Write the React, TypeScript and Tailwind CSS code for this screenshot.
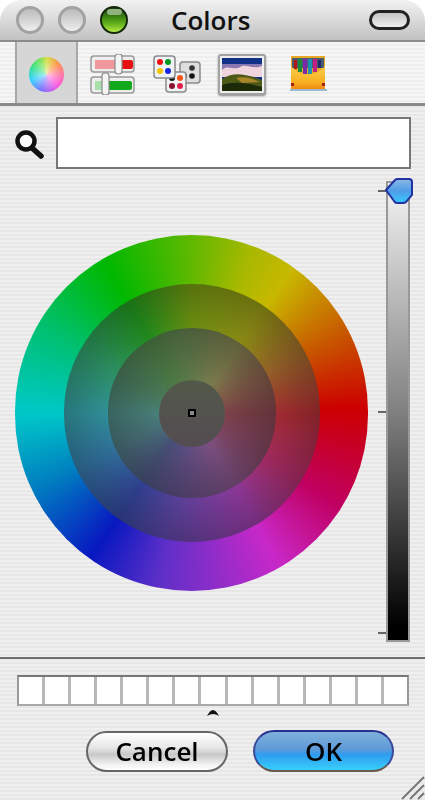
import React from "react";

const font = { title: "font-['Open_Sans','Noto_Sans',sans-serif]" };

function TrafficLight({ green }: { green?: boolean }) {
  if (green) {
    return (
      <div className="w-[28px] h-[28px] rounded-full border-[2px] border-[#13280a] bg-[linear-gradient(#1f3f10,#3f8a12_40%,#6cb81e_70%,#b4ec48)] flex justify-center">
        <div className="mt-[1px] w-[15px] h-[6px] rounded-full bg-[#8fb27e]" />
      </div>
    );
  }
  return (
    <div className="w-[28px] h-[28px] rounded-full border-[3px] border-[#a2a2a2] bg-[linear-gradient(#bcbcbc,#d6d6d6_55%,#f0f0f0)]" />
  );
}

function SlidersIcon() {
  return (
    <svg width="45" height="41" viewBox="0 0 45 41">
      <rect x="1" y="2" width="43" height="16" rx="3" fill="#eee" stroke="#9a9a9a" strokeWidth="1.5" />
      <rect x="5" y="6" width="38" height="9" rx="2" fill="#e80f12" />
      <rect x="5" y="6" width="23" height="9" fill="#f0989c" />
      <rect x="1" y="23" width="43" height="16" rx="3" fill="#eee" stroke="#9a9a9a" strokeWidth="1.5" />
      <rect x="5" y="27" width="37" height="9" rx="2" fill="#12a81c" />
      <rect x="5" y="27" width="12" height="9" fill="#a8dfa8" />
      <rect x="25" y="0" width="7" height="20" rx="3" fill="#f4f4f4" stroke="#8a8a8a" strokeWidth="1.2" />
      <rect x="12" y="19" width="7" height="22" rx="3" fill="#f4f4f4" stroke="#8a8a8a" strokeWidth="1.2" />
    </svg>
  );
}

function PaletteIcon() {
  return (
    <svg width="49" height="38" viewBox="0 0 49 38">
      <rect x="27" y="7" width="20" height="21" rx="3" fill="#dedede" stroke="#8a8a8a" strokeWidth="1.5" />
      <circle cx="39" cy="13" r="2.8" fill="#333" />
      <circle cx="31" cy="21" r="2.8" fill="#111" />
      <circle cx="39" cy="21" r="2.8" fill="#111" />
      <rect x="13" y="17" width="20" height="20" rx="3" fill="#eef2f4" stroke="#8a8a8a" strokeWidth="1.5" />
      <circle cx="19" cy="23" r="3" fill="#111" />
      <circle cx="27" cy="23" r="3" fill="#f0561a" />
      <circle cx="19" cy="31" r="3" fill="#8a1030" />
      <circle cx="27" cy="31" r="3" fill="#e0204a" />
      <rect x="1" y="1" width="21" height="22" rx="3" fill="#eef2f4" stroke="#8a8a8a" strokeWidth="1.5" />
      <circle cx="7" cy="7" r="3" fill="#ee1111" />
      <circle cx="15" cy="7" r="3" fill="#0a9a20" />
      <circle cx="7" cy="16" r="3" fill="#f5c400" />
      <circle cx="15" cy="16" r="3" fill="#1424e0" />
    </svg>
  );
}

function ImageIcon() {
  return (
    <div className="w-[48px] h-[41px] rounded-[3px] border-[2px] border-[#a3a3a3] bg-[#eee] p-[2px] shadow-[0_1px_2px_#888]">
      <svg width="40" height="33" viewBox="0 0 40 33" className="block">
        <rect width="40" height="33" fill="#12328a" />
        <rect y="6" width="40" height="10" fill="#8a78b0" />
        <path d="M0 12 C6 6 12 13 18 9 C24 5 30 12 40 8 V19 H0 Z" fill="#f0d4de" />
        <path d="M0 21 C10 14 22 15 40 22 V33 H0 Z" fill="#4d5a18" />
        <path d="M14 20 C22 18 30 20 38 24 L20 25 Z" fill="#a9852a" />
        <path d="M0 27 C12 23 26 25 40 29 V33 H0 Z" fill="#1d2a0a" />
      </svg>
    </div>
  );
}

function CrayonsIcon() {
  return (
    <svg width="38" height="38" viewBox="0 0 38 38">
      <defs>
        <linearGradient id="box" x1="0" y1="0" x2="0" y2="1">
          <stop offset="0" stopColor="#fbd050" />
          <stop offset="0.7" stopColor="#f8b020" />
          <stop offset="1" stopColor="#ee8a10" />
        </linearGradient>
      </defs>
      <rect x="1" y="1" width="34" height="33" fill="#e8a828" />
      <rect x="2" y="3" width="32" height="10" fill="#4a5a70" />
      <rect x="4" y="5" width="3" height="9" fill="#b01818" />
      <rect x="8" y="4" width="4" height="13" fill="#1a8a3a" />
      <rect x="13" y="4" width="4" height="15" fill="#7a2aa8" />
      <rect x="18" y="4" width="4" height="15" fill="#2090b0" />
      <rect x="23" y="4" width="4" height="13" fill="#c02080" />
      <rect x="28" y="5" width="3" height="8" fill="#1a2a6a" />
      <path d="M1 11 C8 22 27 22 35 11 V34 H1 Z" fill="url(#box)" />
      <rect x="1" y="28" width="3" height="3" fill="#a02010" />
      <rect x="32" y="28" width="3" height="3" fill="#a02010" />
      <rect x="0" y="34" width="37" height="2" fill="#9db8d0" />
    </svg>
  );
}

function PillButton({ label, primary }: { label: string; primary?: boolean }) {
  return (
    <div
      className={
        primary
          ? "w-[141px] h-[42px] rounded-full border-[2px] border-t-[#27308f] border-x-[#3b4a9a] border-b-[#6a5a50] bg-[linear-gradient(#7fb0dc_0%,#5f9ad8_45%,#2f9cf0_60%,#37d0fb_100%)] flex items-center justify-center text-[26px] font-semibold text-black"
          : "w-[142px] h-[41px] rounded-full border-[2px] border-[#666] bg-[linear-gradient(#ffffff_0%,#e6e6e6_40%,#c8c8c8_58%,#f2f2f2_85%,#ffffff_100%)] flex items-center justify-center text-[26px] font-semibold text-black"
      }
    >
      <span className={font.title}>{label}</span>
    </div>
  );
}

export default function App() {
  const cells = Array.from({ length: 15 }, (_, i) => i);
  return (
    <div className="relative w-[425px] h-[800px] overflow-hidden bg-white">
      <div className="flex flex-col w-full h-full rounded-t-[22px] overflow-hidden bg-[repeating-linear-gradient(#efefef_0px,#efefef_2px,#e7e7e7_2px,#e7e7e7_4px)] blur-[0.6px]">
        {/* title bar */}
        <div className="flex items-center h-[42px] shrink-0 pl-[16px] pr-[16px] border-b-[2px] border-[#8c8c8c] bg-[linear-gradient(#f2f2f2,#dcdcdc_45%,#c2c2c2)]">
          <div className="flex gap-[14px]">
            <TrafficLight />
            <TrafficLight />
            <TrafficLight green />
          </div>
          <div className={`${font.title} ml-[43px] text-[26px] font-semibold text-[#111] leading-none`}>Colors</div>
          <div className="ml-auto mr-[-1px] w-[41px] h-[20px] rounded-full border-[3px] border-[#222] bg-[linear-gradient(#c5c5c5,#eeeeee)]" />
        </div>

        {/* toolbar */}
        <div className="flex items-center h-[64px] shrink-0 pl-[15px] border-b-[3px] border-[#8a8a8a] bg-[repeating-linear-gradient(#f6f6f6_0px,#f6f6f6_2px,#eeeeee_2px,#eeeeee_4px)]">
          <div className="flex items-center justify-center w-[63px] h-full bg-[#d6d6d6] border-x-[2px] border-[#a8a8a8]">
            <div className="relative w-[35px] h-[35px] mt-[3px] rounded-full bg-[conic-gradient(#d0e040,#ff9040_45deg,#ff70a0_90deg,#ff50e0_135deg,#7070ff_200deg,#30d0ff_250deg,#30e080_300deg,#80e050_340deg,#d0e040)]">
              <div className="absolute inset-0 rounded-full bg-[radial-gradient(#ffffff99_5%,#ffffff00_70%)]" />
            </div>
          </div>
          <div className="ml-[12px] mt-[3px]">
            <SlidersIcon />
          </div>
          <div className="ml-[18px] mt-[3px]">
            <PaletteIcon />
          </div>
          <div className="ml-[16px] mt-[3px]">
            <ImageIcon />
          </div>
          <div className="ml-[24px] mt-[3px]">
            <CrayonsIcon />
          </div>
        </div>

        {/* search */}
        <div className="flex items-center shrink-0 pt-[11px] pl-[14px] pr-[14px]">
          <svg width="30" height="30" viewBox="0 0 30 30" className="shrink-0 mt-[4px]">
            <circle cx="12" cy="11" r="8.5" fill="#fff" stroke="#111" strokeWidth="4.5" />
            <path d="M18 18 L27 26" stroke="#111" strokeWidth="5.5" strokeLinecap="round" />
          </svg>
          <div className="ml-[12px] flex-1 h-[52px] bg-white border-[2px] border-[#777]" />
        </div>

        {/* wheel and brightness slider */}
        <div className="relative flex items-start shrink-0 h-[488px] pl-[15px]">
          <div className="mt-[66px] relative w-[353px] h-[356px] rounded-full flex items-center justify-center bg-[conic-gradient(#60b800_0deg,#a8b800_20deg,#c8b800_35deg,#c85800_62deg,#cc0000_88deg,#c00060_122deg,#c828c8_150deg,#6030c8_190deg,#0818c0_215deg,#0080c0_245deg,#00c8c8_270deg,#00c070_300deg,#00b800_330deg,#60b800_360deg)]">
            <div className="w-[256px] h-[258px] rounded-full flex items-center justify-center bg-[radial-gradient(closest-side,#00000000_66%,#00000030_100%),conic-gradient(#6a8c10_0deg,#8a8a14_35deg,#946028_62deg,#a02a30_90deg,#a02a60_122deg,#8c3898_150deg,#584098_190deg,#304090_215deg,#30709a_245deg,#309098_270deg,#2c9060_300deg,#1f8a1c_330deg,#6a8c10_360deg)]">
              <div className="w-[168px] h-[170px] rounded-full flex items-center justify-center bg-[radial-gradient(closest-side,#00000000_40%,#00000038_100%),conic-gradient(#60784a_0deg,#7c7a4c_35deg,#805c48_62deg,#7c4048_90deg,#7c4460_122deg,#7c5080_150deg,#5c4c80_190deg,#485078_215deg,#487078_245deg,#488078_270deg,#487858_300deg,#4c7a44_330deg,#60784a_360deg)]">
                <div className="w-[66px] h-[67px] rounded-full bg-[linear-gradient(#52594a,#544c52)] flex items-center justify-center">
                  <div className="w-[8px] h-[8px] rounded-[1px] border-[2px] border-black bg-[#888]" />
                </div>
              </div>
            </div>
          </div>

          <div className="absolute left-[386px] top-[12px] w-[24px] h-[461px] border-[2px] border-[#999] bg-[linear-gradient(#f4f4f4_0%,#e0e0e0_8%,#808080_50%,#000000_97%)]" />
          <div className="absolute left-[378px] top-[21px] w-[8px] h-[2px] bg-[#666]" />
          <div className="absolute left-[378px] top-[242px] w-[8px] h-[2px] bg-[#666]" />
          <div className="absolute left-[378px] top-[463px] w-[8px] h-[2px] bg-[#666]" />
          <svg width="30" height="30" viewBox="0 0 30 30" className="absolute left-[384px] top-[8px]">
            <defs>
              <linearGradient id="thumb" x1="0" y1="0" x2="0" y2="1">
                <stop offset="0" stopColor="#8cb8e4" />
                <stop offset="0.5" stopColor="#4f9ce8" />
                <stop offset="1" stopColor="#38c8ff" />
              </linearGradient>
            </defs>
            <path d="M2 13 L11 3 Q12 2 14 2 H25 Q28 2 28 5 V18 L22 25 Q21 26 19 26 H13 Q11 26 10 24 Z" fill="url(#thumb)" stroke="#2233a0" strokeWidth="2" />
          </svg>
        </div>

        <div className="h-[2px] shrink-0 bg-[#6e6e6e]" />

        {/* saved swatches */}
        <div className="shrink-0 pt-[16px] pl-[17px]">
          <div className="flex w-[392px] h-[31px] border-[2px] border-t-[#777] border-x-[#999] border-b-[#aaa] bg-[#b8b8b8] gap-[3px]">
            {cells.map((i) => (
              <div key={i} className="flex-1 bg-white" />
            ))}
          </div>
          <div className="ml-[189px] mt-[1px] w-[14px] h-[10px]">
            <svg width="14" height="10" viewBox="0 0 14 10" className="block">
              <path d="M1 9 Q7 -3 13 9 Q7 5 1 9 Z" fill="#111" />
            </svg>
          </div>
        </div>

        {/* buttons */}
        <div className="flex items-center shrink-0 mt-[13px] pl-[86px] gap-[25px]">
          <PillButton label="Cancel" />
          <PillButton label="OK" primary />
        </div>
      </div>

      <svg width="24" height="24" viewBox="0 0 24 24" className="absolute right-0 bottom-0">
        <path d="M1 23 L23 1 M9 23 L23 9 M17 23 L23 17" stroke="#777" strokeWidth="2" />
      </svg>
    </div>
  );
}
